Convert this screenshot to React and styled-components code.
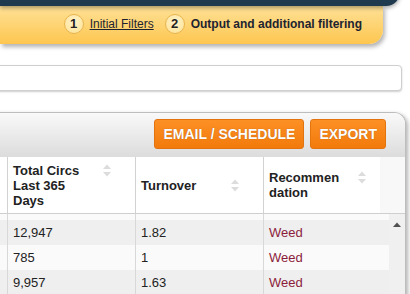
import React from 'react';
import styled, { createGlobalStyle } from 'styled-components';

const GlobalStyle = createGlobalStyle`
    html, body {
        margin: 0;
        padding: 0;
        background: #fff;
        overflow: hidden;
    }
    body {
        font-family: "Liberation Sans", Arial, sans-serif;
        color: #222;
    }
`;

const Page = styled.div`
    width: 410px;
    height: 294px;
    overflow: hidden;
    background: #fff;
`;

const NavBar = styled.div`
    position: relative;
    z-index: 2;
    height: 26px;
    margin-top: -20px;
    margin-right: 10px;
    background: #1f3a4f;
    border-radius: 0 0 14px 0;
    box-shadow: 0 2px 4px rgba(0, 0, 0, 0.35);
`;

const StepBar = styled.div`
    height: 38px;
    margin-right: 27px;
    padding: 0 21px 3px 0;
    box-sizing: border-box;
    display: flex;
    align-items: center;
    justify-content: flex-end;
    background: linear-gradient(#ffe197, #fdc64f);
    border-radius: 0 0 14px 0;
    box-shadow: 2px 3px 4px rgba(0, 0, 0, 0.3);
`;

const Step = styled.div`
    display: flex;
    align-items: center;
    margin-left: ${props => props.$first ? '0' : '11px'};
`;

const StepNumber = styled.span`
    width: 20px;
    height: 20px;
    box-sizing: border-box;
    border: 1px solid #e6b552;
    border-radius: 50%;
    background: radial-gradient(circle at 50% 40%, #fff4cf, #ffe08c);
    display: flex;
    align-items: center;
    justify-content: center;
    font-size: 13px;
    font-weight: bold;
    color: #222;
    margin-right: 6px;
`;

const StepLabel = styled.span`
    font-size: 12px;
    color: #1d2430;
    font-weight: ${props => props.$active ? 'bold' : 'normal'};
    text-decoration: ${props => props.$active ? 'none' : 'underline'};
`;

const SearchBox = styled.div`
    height: 26px;
    box-sizing: border-box;
    margin: 21px 8px 0 -10px;
    background: #fff;
    border: 1px solid #cfcfcf;
    border-radius: 4px;
    box-shadow: 0 1px 2px rgba(0, 0, 0, 0.2);
`;

const Panel = styled.div`
    margin: 21px 4px 0 -20px;
    border: 1px solid #bdbdbd;
    border-bottom: none;
    border-radius: 0 12px 0 0;
    box-shadow: 2px 2px 4px rgba(0, 0, 0, 0.3);
    overflow: hidden;
    background: #fff;
`;

const PanelHeader = styled.div`
    height: 44px;
    box-sizing: border-box;
    padding: 6px 19px 0 0;
    display: flex;
    justify-content: flex-end;
    align-items: flex-start;
    gap: 6px;
    background: linear-gradient(#f9f9f9, #dcdcdc);
`;

const ActionButton = styled.button`
    height: 30px;
    padding: 0 8px;
    background: linear-gradient(#fd9025, #f27a0b);
    border: 1px solid #e3730f;
    border-radius: 3px;
    color: #fff;
    font-family: "Liberation Sans", Arial, sans-serif;
    font-size: 14px;
    font-weight: bold;
    text-shadow: 0 0 1px rgba(0, 0, 0, 0.35);
    cursor: pointer;
`;

const TableHead = styled.div`
    display: grid;
    grid-template-columns: 26px 128px 128px 117px 1fr;
    height: 57px;
    box-sizing: border-box;
    border-bottom: 1px solid #cfcfcf;
    background: #f8f8f8;
`;

const HeadCell = styled.div`
    display: flex;
    align-items: center;
    padding: 0 ${props => props.$pr || 23}px 0 5px;
    background: #fff;
    border-left: ${props => props.$first ? 'none' : '1px solid #d2d2d2'};
`;

const HeadInner = styled.div`
    flex: 1;
    display: flex;
    align-items: flex-start;
    justify-content: space-between;
`;

const HeadLabel = styled.span`
    font-size: 13px;
    font-weight: bold;
    line-height: 15px;
    color: #222;
`;

const BodyWrap = styled.div`
    display: flex;
`;

const Rows = styled.div`
    flex: 1;
`;

const Row = styled.div`
    display: grid;
    grid-template-columns: 26px 128px 128px 126px;
    height: ${props => props.$h || 25}px;
    background: ${props => props.$odd ? '#efefef' : '#fafafa'};
`;

const Cell = styled.div`
    display: flex;
    align-items: center;
    padding-left: 5px;
    font-size: 13px;
    color: ${props => props.$weed ? '#8c1c3c' : '#222'};
    border-left: ${props => props.$first ? 'none' : '1px solid #d8d8d8'};
`;

const Scrollbar = styled.div`
    width: 17px;
    background: #f0f0f0;
    display: flex;
    justify-content: center;
    padding-top: 8px;
    box-sizing: border-box;
`;

const SortIcon = () => (
    <svg width="10" height="15" viewBox="0 0 10 15">
        <polygon points="1,6 5,1.5 9,6" fill="#dcdcdc" />
        <polygon points="1,9 5,13.5 9,9" fill="#dcdcdc" />
    </svg>
);

const ScrollUp = () => (
    <svg width="8" height="5" viewBox="0 0 8 5">
        <polygon points="0,5 4,0.5 8,5" fill="#505050" />
    </svg>
);

const rows = [
    { circs: '12,947', turnover: '1.82', rec: 'Weed' },
    { circs: '785', turnover: '1', rec: 'Weed' },
    { circs: '9,957', turnover: '1.63', rec: 'Weed' },
];

export default function App() {
    return (
        <Page>
            <GlobalStyle />
            <NavBar />
            <StepBar>
                <Step $first>
                    <StepNumber>1</StepNumber>
                    <StepLabel>Initial Filters</StepLabel>
                </Step>
                <Step>
                    <StepNumber>2</StepNumber>
                    <StepLabel $active>Output and additional filtering</StepLabel>
                </Step>
            </StepBar>
            <SearchBox />
            <Panel>
                <PanelHeader>
                    <ActionButton>EMAIL / SCHEDULE</ActionButton>
                    <ActionButton>EXPORT</ActionButton>
                </PanelHeader>
                <TableHead>
                    <HeadCell $first />
                    <HeadCell>
                        <HeadInner>
                            <HeadLabel>Total Circs<br />Last 365<br />Days</HeadLabel>
                            <SortIcon />
                        </HeadInner>
                    </HeadCell>
                    <HeadCell>
                        <HeadInner>
                            <HeadLabel>Turnover</HeadLabel>
                            <SortIcon />
                        </HeadInner>
                    </HeadCell>
                    <HeadCell $pr={13}>
                        <HeadInner>
                            <HeadLabel>Recommen<br />dation</HeadLabel>
                            <SortIcon />
                        </HeadInner>
                    </HeadCell>
                    <div />
                </TableHead>
                <BodyWrap>
                    <Rows>
                        <Row $h={6}>
                            <Cell $first />
                            <Cell />
                            <Cell />
                            <Cell />
                        </Row>
                        {rows.map((r, i) => (
                            <Row key={i} $odd={i % 2 === 0}>
                                <Cell $first />
                                <Cell>{r.circs}</Cell>
                                <Cell>{r.turnover}</Cell>
                                <Cell $weed>{r.rec}</Cell>
                            </Row>
                        ))}
                    </Rows>
                    <Scrollbar>
                        <ScrollUp />
                    </Scrollbar>
                </BodyWrap>
            </Panel>
        </Page>
    );
}
